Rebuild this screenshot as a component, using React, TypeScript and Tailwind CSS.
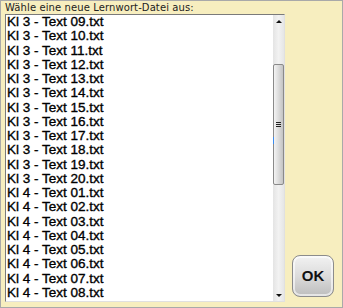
const FILES = [
  'Kl 3 - Text 09.txt',
  'Kl 3 - Text 10.txt',
  'Kl 3 - Text 11.txt',
  'Kl 3 - Text 12.txt',
  'Kl 3 - Text 13.txt',
  'Kl 3 - Text 14.txt',
  'Kl 3 - Text 15.txt',
  'Kl 3 - Text 16.txt',
  'Kl 3 - Text 17.txt',
  'Kl 3 - Text 18.txt',
  'Kl 3 - Text 19.txt',
  'Kl 3 - Text 20.txt',
  'Kl 4 - Text 01.txt',
  'Kl 4 - Text 02.txt',
  'Kl 4 - Text 03.txt',
  'Kl 4 - Text 04.txt',
  'Kl 4 - Text 05.txt',
  'Kl 4 - Text 06.txt',
  'Kl 4 - Text 07.txt',
  'Kl 4 - Text 08.txt',
];

function ScrollBar() {
  return (
    <div className="flex w-[11px] shrink-0 flex-col items-center bg-gradient-to-r from-[#e4e4e4] via-[#f2f2f2] to-[#e6e6e6]">
      <div className="mt-[5px] h-0 w-0 border-x-[3px] border-b-[3px] border-x-transparent border-b-[#111]" />
      <div className="relative mt-[41px] flex h-[121px] w-[11px] items-center justify-center rounded-[2px] border border-[#8a8a8a] bg-gradient-to-r from-[#f4f4f4] via-[#dcdcdc] to-[#c4c4c4]">
        <div className="flex flex-col gap-[1px]">
          <div className="h-px w-[5px] bg-[#222]" />
          <div className="h-px w-[5px] bg-[#222]" />
          <div className="h-px w-[5px] bg-[#222]" />
        </div>
        <div className="absolute left-[-1px] top-[72px] h-[7px] w-px bg-[#3b8cf0]" />
      </div>
      <div className="flex-1" />
      <div className="mb-[4px] h-0 w-0 border-x-[3px] border-t-[3px] border-x-transparent border-t-[#111]" />
    </div>
  );
}

export default function App() {
  return (
    <div className="flex h-[308px] w-[343px] flex-col border border-[#a9a9a9] bg-[#f7eebf] font-['DejaVu_Sans',sans-serif]">
      <p className="ml-[4px] mt-[1px] h-[12px] text-[10px] leading-[12px] tracking-[0.1px] text-[#222]">Wähle eine neue Lernwort-Datei aus:</p>
      <div className="flex flex-1 items-end gap-[7px] pb-[6px] pl-[4px]">
        <div className="flex h-[288px] w-[280px] border-b border-l border-r border-t border-b-[#e0e0e0] border-l-[#7a7a7a] border-r-[#e0e0e0] border-t-[#7a7a7a] bg-white">
          <ul className="flex-1 overflow-hidden pl-[1px] font-['Liberation_Sans',sans-serif] text-[13.5px] leading-[14.25px] text-black">
            {FILES.map((name) => (
              <li key={name} className="whitespace-nowrap [-webkit-text-stroke:0.35px_black]">
                {name}
              </li>
            ))}
          </ul>
          <ScrollBar />
        </div>
        <button className="mb-[5px] flex h-[42px] w-[42px] items-center justify-center rounded-[8px] border border-[#8c8c8c] bg-gradient-to-b from-[#f2f2f2] via-[#dcdcdc] to-[#bdbdbd] font-['Liberation_Sans',sans-serif] text-[15px] font-bold text-[#111] shadow-[inset_0_0_0_2px_rgba(255,255,255,0.6)]">
          OK
        </button>
      </div>
    </div>
  );
}
